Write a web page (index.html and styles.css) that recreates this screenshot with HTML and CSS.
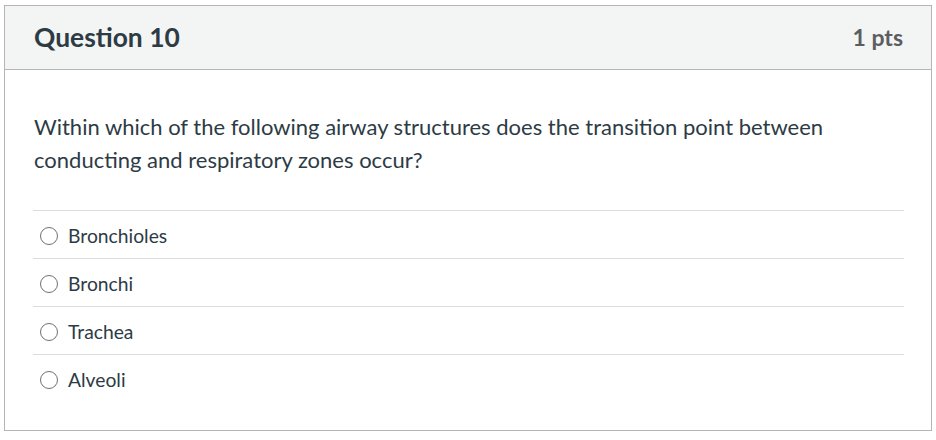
FILE: index.html
```html
<!DOCTYPE html>
<html>
<head>
<meta charset="utf-8">
<link rel="stylesheet" href="styles.css">
</head>
<body>
<div class="quiz">
  <div class="header">
    <div class="title">Question 10</div>
    <div class="pts">1 pts</div>
  </div>
  <div class="content">
    <p class="text">Within which of the following airway structures does the transition point between conducting and respiratory zones occur?</p>
    <div class="answers">
      <div class="answer"><span class="radio"></span><span class="label">Bronchioles</span></div>
      <div class="answer"><span class="radio"></span><span class="label">Bronchi</span></div>
      <div class="answer"><span class="radio"></span><span class="label">Trachea</span></div>
      <div class="answer last"><span class="radio"></span><span class="label">Alveoli</span></div>
    </div>
  </div>
</div>
</body>
</html>
```
FILE: styles.css
```css
html, body { margin: 0; padding: 0; background: #fff; }
body { font-family: Lato, "Open Sans", sans-serif; color: #2d3b45; }
.quiz {
  margin: 5px 0 0 4px;
  width: 926px;
  height: 424px;
  border: 1px solid #b5b5b5;
  box-sizing: content-box;
}
.header {
  height: 63px;
  background: #f3f4f4;
  border-bottom: 1px solid #b5b5b5;
  display: flex;
  align-items: center;
  justify-content: space-between;
  padding: 0 28px 0 29px;
}
.title { font-size: 26.4px; font-weight: 700; color: #2d3b45; padding-bottom: 2px; }
.pts { font-size: 23px; font-weight: 700; color: #5b5e60; padding-bottom: 2px; }
.content { padding: 40px 27px 0 28px; }
.text {
  margin: 0 0 34px 1px;
  font-size: 22px;
  line-height: 33px;
}
.answers { border-top: 1px solid #dcdcdc; }
.answer {
  height: 45px;
  padding-top: 2px;
  border-bottom: 1px solid #dcdcdc;
  display: flex;
  align-items: center;
}
.answer.last { border-bottom: none; }
.radio {
  width: 16px; height: 16px;
  border: 1.5px solid #707070;
  border-radius: 50%;
  margin-left: 7px;
  margin-right: 10px;
  flex: none;
}
.label { font-size: 19.3px; color: #2d3b45; }
```
